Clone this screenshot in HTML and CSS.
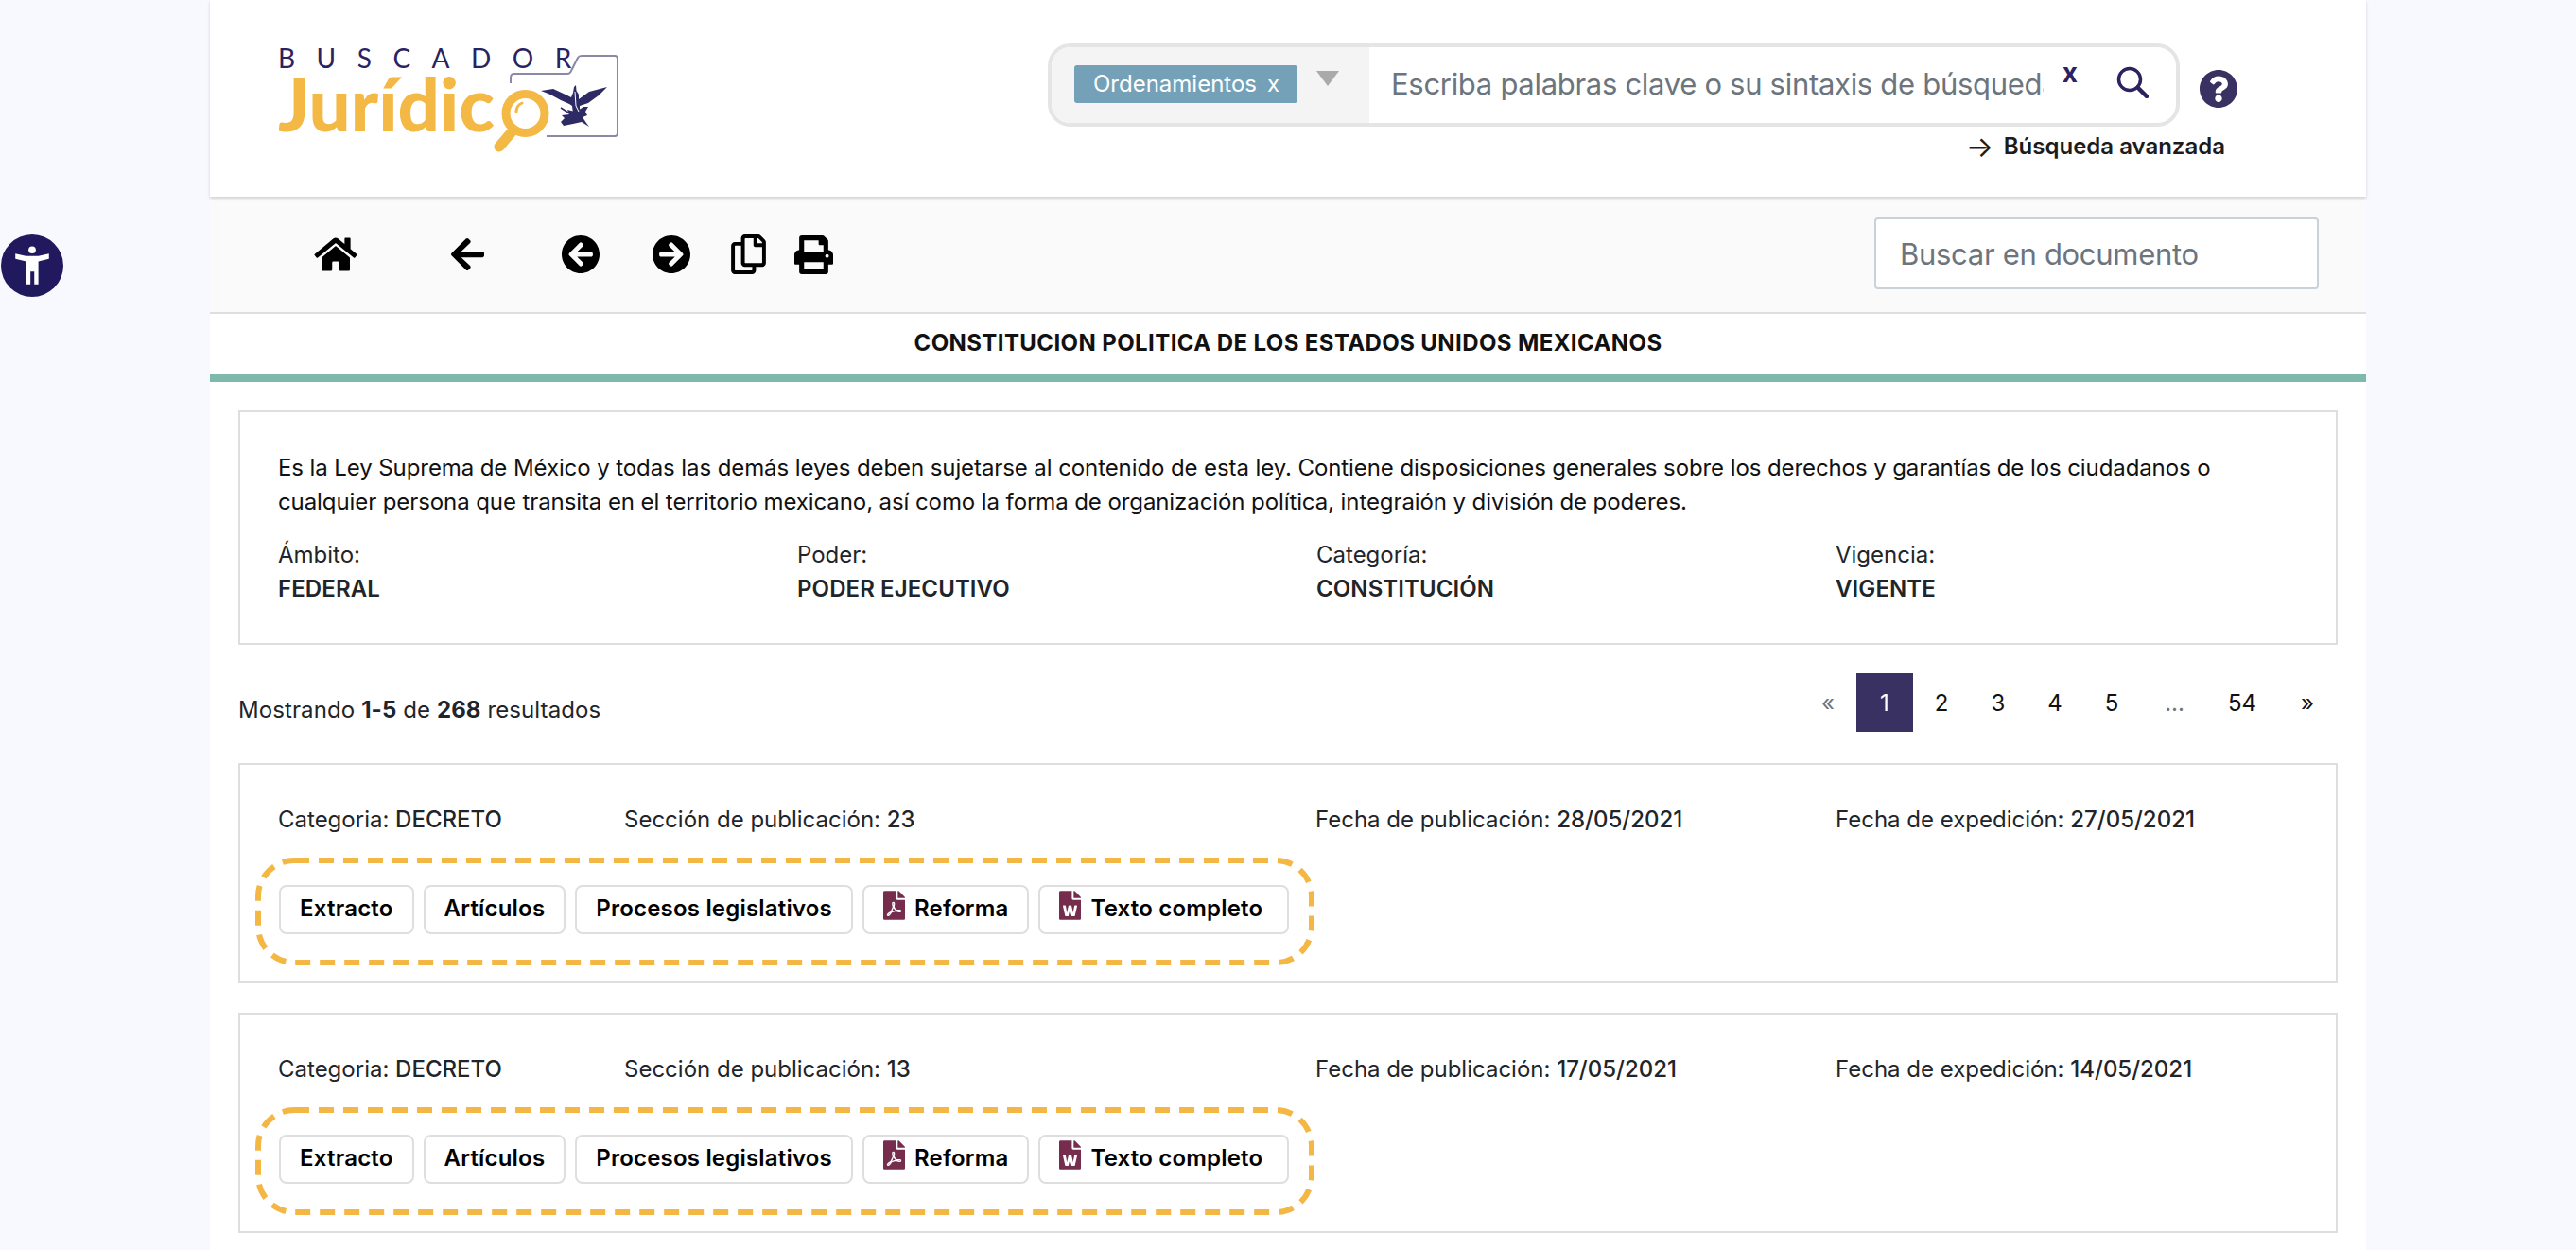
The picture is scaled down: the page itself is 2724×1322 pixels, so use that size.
FILE: index.html
```html
<!DOCTYPE html>
<html lang="es">
<head>
<meta charset="utf-8">
<title>Buscador Jurídico</title>
<link rel="stylesheet" href="styles.css">
</head>
<body>
<button class="a11y" aria-label="Accesibilidad">
  <svg viewBox="0 0 65 65" width="66" height="66"><circle cx="32.5" cy="32.5" r="32.5" fill="#21195e"/><circle cx="32.5" cy="16" r="3.800" fill="#fff"/><path d="M15 20L26 22.500H39L50 20V25.300L39 28V52H34.700V38.700H30.700V52H26.300V28L15 25.300Z" fill="#fff"/></svg>
</button>
<div class="page">
  <header class="header">
    <a class="logo" href="#">
      <span class="logo-top">BUSCADOR</span>
      <span class="logo-main">Jurídic</span>
      <svg class="logo-art" viewBox="294 0 400 208" width="400" height="208" aria-hidden="true">
        <path d="M540 88v-6q0-4 4-4h56q3 0 4-3l7-14q1-2 4-2h35q3 0 3 3v79q0 3-3 3h-72" fill="none" stroke="#8b8aa6" stroke-width="2"/>
        <circle cx="555.500" cy="120" r="20.500" fill="#fff" stroke="#f4b844" stroke-width="9"/>
        <path d="M540 141l-12 14" stroke="#f4b844" stroke-width="11" stroke-linecap="round"/>
        <path d="M546 118a10 10 0 0 1 6-9" fill="none" stroke="#f4b844" stroke-width="3" stroke-linecap="round"/>
        <path d="M572 96L585 94L598 100L604 103L606 98L607 92L609 90L609.500 96L612 100L612 105L623 97L642 92L633 101L622 109L613 112L613 120L606 120L605 112L602 110L593 106L582 100Z" fill="#2d2a66"/>
        <path d="M600 116L608 118L614 115L617 113L622 113L619 118L621 122L616 124L620 130L623 134L615 129L606 131L596 133L593 129L597 125L594 122L602 121Z" fill="#2d2a66"/>
        <path d="M593 114L604 121" stroke="#2d2a66" stroke-width="1.500"/>
        <path d="M608 97L609 112L612 118" fill="none" stroke="#fff" stroke-width="1"/>
      </svg>
    </a>
    <div class="header-right">
      <div class="search-row">
        <div class="search-box">
          <div class="search-filter">
            <span class="tag">Ordenamientos<span class="tag-x">x</span></span>
            <span class="caret"></span>
          </div>
          <input class="search-input" type="text" placeholder="Escriba palabras clave o su sintaxis de búsqueda">
          <span class="search-clear">x</span>
          <svg class="search-icon" viewBox="0 0 34 34" width="34" height="34" aria-hidden="true"><circle cx="14" cy="14" r="11.500" fill="none" stroke="#2b2262" stroke-width="3.500"/><path d="M22.500 22.500L32 32" stroke="#2b2262" stroke-width="4.500" stroke-linecap="round"/></svg>
        </div>
        <svg class="help" viewBox="8 8 496 496" width="40" height="40" aria-hidden="true"><path fill="#3a3163" d="M504 256c0 136.997-111.043 248-248 248S8 392.997 8 256C8 119.083 119.043 8 256 8s248 111.083 248 248zM262.655 90c-54.497 0-89.255 22.957-116.549 63.758-3.536 5.286-2.353 12.415 2.715 16.258l34.699 26.31c5.205 3.947 12.621 3.008 16.665-2.122 17.864-22.658 30.113-35.797 57.303-35.797 20.429 0 45.698 13.148 45.698 32.958 0 14.976-12.363 22.667-32.534 33.976C247.128 238.528 216 254.941 216 296v4c0 6.627 5.373 12 12 12h56c6.627 0 12-5.373 12-12v-1.333c0-28.462 83.186-29.647 83.186-106.667 0-58.002-60.165-102-116.531-102zM256 338c-25.365 0-46 20.635-46 46 0 25.364 20.635 46 46 46s46-20.636 46-46c0-25.365-20.635-46-46-46z"/></svg>
      </div>
      <a class="advanced" href="#"><span class="advanced-arrow">→</span>Búsqueda avanzada</a>
    </div>
  </header>

  <nav class="toolbar">
    <svg class="tool tool-home" viewBox="0 0 576 512" width="46" height="40"><path d="M280.37 148.26L96 300.11V464a16 16 0 0 0 16 16l112.06-.29a16 16 0 0 0 15.92-16V368a16 16 0 0 1 16-16h64a16 16 0 0 1 16 16v95.64a16 16 0 0 0 16 16.05L464 480a16 16 0 0 0 16-16V300L295.67 148.26a12.19 12.19 0 0 0-15.3 0zM571.6 251.47L488 182.56V44.05a12 12 0 0 0-12-12h-56a12 12 0 0 0-12 12v72.61L318.47 43a48 48 0 0 0-61 0L4.34 251.47a12 12 0 0 0-1.6 16.9l25.5 31A12 12 0 0 0 45.15 301l235.22-193.74a12.19 12.19 0 0 1 15.3 0L530.9 301a12 12 0 0 0 16.9-1.6l25.5-31a12 12 0 0 0-1.7-16.93z"/></svg>
    <svg class="tool tool-back" viewBox="0 0 448 512" width="35" height="40"><path d="M257.5 445.1l-22.2 22.2c-9.4 9.4-24.6 9.4-33.9 0L7 273c-9.4-9.4-9.4-24.6 0-33.9L201.4 44.7c9.4-9.4 24.6-9.4 33.9 0l22.2 22.2c9.500 9.500 9.300 25-.4 34.300L136.6 216H424c13.300 0 24 10.700 24 24v32c0 13.300-10.700 24-24 24H136.6l120.500 114.800c9.800 9.300 10 24.800.4 34.300z"/></svg>
    <svg class="tool tool-prev" viewBox="8 8 496 496" width="40" height="40"><path d="M256 504C119 504 8 393 8 256S119 8 256 8s248 111 248 248-111 248-248 248zm28.9-143.6L209.4 288H392c13.300 0 24-10.700 24-24v-16c0-13.300-10.700-24-24-24H209.4l75.500-72.400c9.700-9.300 9.900-24.800.4-34.300l-11-10.900c-9.400-9.400-24.600-9.400-33.900 0L107.700 239c-9.400 9.400-9.400 24.600 0 33.900l132.700 132.700c9.400 9.400 24.600 9.400 33.900 0l11-10.900c9.500-9.500 9.300-25-.4-34.300z"/></svg>
    <svg class="tool tool-next" viewBox="8 8 496 496" width="40" height="40"><path d="M256 8c137 0 248 111 248 248S393 504 256 504 8 393 8 256 119 8 256 8zm-28.9 143.600l75.500 72.400H120c-13.300 0-24 10.700-24 24v16c0 13.300 10.700 24 24 24h182.600l-75.500 72.400c-9.700 9.300-9.900 24.800-.4 34.300l11 10.900c9.400 9.400 24.600 9.400 33.900 0L404.300 273c9.400-9.400 9.400-24.600 0-33.900L271.600 106.300c-9.400-9.400-24.600-9.400-33.900 0l-11 10.900c-9.500 9.600-9.300 25.100.4 34.400z"/></svg>
    <svg class="tool tool-copy" viewBox="0 0 448 512" width="37" height="42"><path d="M433.941 65.941l-51.882-51.882A48 48 0 0 0 348.118 0H176c-26.51 0-48 21.49-48 48v48H48c-26.51 0-48 21.49-48 48v320c0 26.51 21.49 48 48 48h224c26.51 0 48-21.49 48-48v-48h80c26.51 0 48-21.49 48-48V99.882a48 48 0 0 0-14.059-33.941zM266 464H54a6 6 0 0 1-6-6V150a6 6 0 0 1 6-6h74v224c0 26.51 21.49 48 48 48h96v42a6 6 0 0 1-6 6zm128-96H182a6 6 0 0 1-6-6V54a6 6 0 0 1 6-6h106v88c0 13.255 10.745 24 24 24h88v202a6 6 0 0 1-6 6zm6-256h-64V48h9.632c1.591 0 3.117.632 4.243 1.757l48.368 48.368a6 6 0 0 1 1.757 4.243V112z"/></svg>
    <svg class="tool tool-print" viewBox="0 0 512 512" width="41" height="41"><path d="M448 192V77.25c0-8.49-3.37-16.62-9.37-22.63L393.37 9.37c-6-6-14.14-9.37-22.63-9.37H96C78.33 0 64 14.33 64 32v160c-35.35 0-64 28.65-64 64v112c0 8.84 7.16 16 16 16h48v96c0 17.67 14.33 32 32 32h320c17.67 0 32-14.33 32-32v-96h48c8.84 0 16-7.16 16-16V256c0-35.35-28.65-64-64-64zm-64 256H128v-96h256v96zm0-224H128V64h192v48c0 8.84 7.16 16 16 16h48v96zm48 72c-13.25 0-24-10.75-24-24 0-13.26 10.75-24 24-24s24 10.74 24 24c0 13.25-10.75 24-24 24z"/></svg>
    <input class="doc-search" type="text" placeholder="Buscar en documento">
  </nav>

  <h1 class="doc-title">CONSTITUCION POLITICA DE LOS ESTADOS UNIDOS MEXICANOS</h1>

  <main class="content">
    <section class="panel">
      <p class="panel-text">Es la Ley Suprema de México y todas las demás leyes deben sujetarse al contenido de esta ley. Contiene disposiciones generales sobre los derechos y garantías de los ciudadanos o cualquier persona que transita en el territorio mexicano, así como la forma de organización política, integraión y división de poderes.</p>
      <div class="meta-grid">
        <div>Ámbito:<strong class="meta-value">FEDERAL</strong></div>
        <div>Poder:<strong class="meta-value">PODER EJECUTIVO</strong></div>
        <div>Categoría:<strong class="meta-value">CONSTITUCIÓN</strong></div>
        <div>Vigencia:<strong class="meta-value">VIGENTE</strong></div>
      </div>
    </section>

    <div class="results-bar">
      <p class="results-count">Mostrando <b>1-5</b> de <b>268</b> resultados</p>
      <ul class="pagination">
        <li class="muted">«</li><li class="active">1</li><li>2</li><li>3</li><li>4</li><li>5</li><li class="muted dots">...</li><li class="wide">54</li><li>»</li>
      </ul>
    </div>

    <article class="card">
      <div class="card-row">
        <div class="card-split"><span>Categoria: <span class="val">DECRETO</span></span><span>Sección de publicación: <span class="val">23</span></span></div>
        <div>Fecha de publicación: <span class="val">28/05/2021</span></div>
        <div>Fecha de expedición: <span class="val">27/05/2021</span></div>
      </div>
      <div class="actions">
        <svg class="dash" width="1120" height="114" aria-hidden="true"><rect x="3" y="3" width="1114" height="108" rx="38" fill="none" stroke="#f4b744" stroke-width="6" stroke-dasharray="16 10"/></svg>
        <a class="btn">Extracto</a>
        <a class="btn">Artículos</a>
        <a class="btn">Procesos legislativos</a>
        <a class="btn btn-reforma"><svg class="file-icon" viewBox="0 0 384 512" width="23" height="31"><path d="M181.9 256.100c-5-16-4.900-46.900-2-46.900 8.400 0 7.600 36.900 2 46.900zm-1.700 47.200c-7.700 20.200-17.300 43.300-28.400 62.700 18.300-7 39-17.200 62.900-21.900-12.700-9.600-24.900-23.400-34.500-40.800zM86.100 428.100c0 .8 13.200-5.400 34.900-40.200-6.700 6.300-29.100 24.500-34.900 40.200zM248 160h136v328c0 13.300-10.700 24-24 24H24c-13.300 0-24-10.700-24-24V24C0 10.700 10.700 0 24 0h200v136c0 13.200 10.800 24 24 24zm-8 171.800c-20-12.200-33.300-29-42.700-53.800 4.500-18.500 11.600-46.600 6.200-64.200-4.700-29.400-42.400-26.500-47.800-6.800-5 18.300-.4 44.100 8.100 77-11.600 27.600-28.700 64.600-40.800 85.800-.1 0-.1.1-.2.1-27.100 13.900-73.600 44.500-54.500 68 5.600 6.900 16 10 21.500 10 17.900 0 35.700-18 61.100-61.800 25.800-8.500 54.100-19.100 79-23.200 21.700 11.800 47.100 19.500 64 19.500 29.200 0 31.200-32 19.700-43.400-13.900-13.600-54.300-9.700-73.600-7.200zM377 105L279 7c-4.500-4.500-10.600-7-17-7h-6v128h128v-6.100c0-6.300-2.500-12.400-7-16.900zm-74.100 255.300c4.100-2.700-2.500-11.900-42.800-9 37.100 15.800 42.800 9 42.800 9z"/></svg>Reforma</a>
        <a class="btn btn-texto"><svg class="file-icon" viewBox="0 0 384 512" width="23" height="31"><path d="M224 136V0H24C10.700 0 0 10.700 0 24v464c0 13.300 10.700 24 24 24h336c13.300 0 24-10.700 24-24V160H248c-13.200 0-24-10.800-24-24zm57.100 120H305c7.700 0 13.400 7.100 11.700 14.700l-38 168c-1.200 5.500-6.100 9.300-11.700 9.300h-38c-5.500 0-10.300-3.800-11.600-9.100-25.800-103.500-20.800-81.200-25.600-110.500h-.5c-1.100 14.300-2.400 17.400-25.600 110.500-1.300 5.300-6.100 9.100-11.600 9.100H117c-5.600 0-10.500-3.900-11.700-9.400l-37.800-168c-1.700-7.500 4-14.600 11.700-14.600h24.500c5.700 0 10.700 4 11.800 9.700 15.600 78 20.100 109.500 21 122.200 1.600-10.200 7.300-32.700 29.400-122.700 1.300-5.400 6.100-9.100 11.700-9.100h29.100c5.600 0 10.400 3.800 11.700 9.200 24 100.400 28.800 124 29.600 129.400-.2-11.200-2.600-17.800 21.600-129.200 1-5.600 5.900-9.500 11.500-9.500zM384 121.900v6.100H256V0h6.100c6.400 0 12.500 2.500 17 7l97.900 98c4.500 4.500 7 10.600 7 16.900z"/></svg>Texto completo</a>
      </div>
    </article>

    <article class="card">
      <div class="card-row">
        <div class="card-split"><span>Categoria: <span class="val">DECRETO</span></span><span>Sección de publicación: <span class="val">13</span></span></div>
        <div>Fecha de publicación: <span class="val">17/05/2021</span></div>
        <div>Fecha de expedición: <span class="val">14/05/2021</span></div>
      </div>
      <div class="actions">
        <svg class="dash" width="1120" height="114" aria-hidden="true"><rect x="3" y="3" width="1114" height="108" rx="38" fill="none" stroke="#f4b744" stroke-width="6" stroke-dasharray="16 10"/></svg>
        <a class="btn">Extracto</a>
        <a class="btn">Artículos</a>
        <a class="btn">Procesos legislativos</a>
        <a class="btn btn-reforma"><svg class="file-icon" viewBox="0 0 384 512" width="23" height="31"><path d="M181.9 256.100c-5-16-4.900-46.900-2-46.900 8.400 0 7.600 36.900 2 46.900zm-1.700 47.200c-7.700 20.200-17.300 43.300-28.400 62.700 18.300-7 39-17.200 62.900-21.900-12.700-9.600-24.900-23.400-34.500-40.800zM86.100 428.100c0 .8 13.200-5.400 34.900-40.200-6.700 6.300-29.100 24.500-34.900 40.200zM248 160h136v328c0 13.300-10.700 24-24 24H24c-13.300 0-24-10.700-24-24V24C0 10.700 10.700 0 24 0h200v136c0 13.200 10.800 24 24 24zm-8 171.800c-20-12.200-33.300-29-42.700-53.800 4.500-18.500 11.600-46.600 6.200-64.200-4.700-29.400-42.400-26.500-47.800-6.800-5 18.300-.4 44.100 8.100 77-11.600 27.600-28.700 64.600-40.800 85.800-.1 0-.1.1-.2.1-27.100 13.900-73.600 44.500-54.500 68 5.600 6.900 16 10 21.500 10 17.900 0 35.700-18 61.100-61.800 25.800-8.500 54.100-19.100 79-23.200 21.700 11.800 47.100 19.500 64 19.500 29.200 0 31.200-32 19.700-43.400-13.900-13.600-54.300-9.700-73.600-7.200zM377 105L279 7c-4.500-4.500-10.600-7-17-7h-6v128h128v-6.100c0-6.300-2.500-12.400-7-16.900zm-74.100 255.300c4.100-2.700-2.500-11.900-42.800-9 37.100 15.800 42.800 9 42.800 9z"/></svg>Reforma</a>
        <a class="btn btn-texto"><svg class="file-icon" viewBox="0 0 384 512" width="23" height="31"><path d="M224 136V0H24C10.700 0 0 10.700 0 24v464c0 13.300 10.700 24 24 24h336c13.300 0 24-10.700 24-24V160H248c-13.200 0-24-10.800-24-24zm57.100 120H305c7.700 0 13.400 7.100 11.700 14.700l-38 168c-1.200 5.500-6.100 9.300-11.700 9.300h-38c-5.500 0-10.300-3.800-11.600-9.100-25.800-103.500-20.800-81.200-25.600-110.500h-.5c-1.100 14.300-2.400 17.400-25.600 110.500-1.300 5.300-6.100 9.100-11.600 9.100H117c-5.600 0-10.500-3.900-11.700-9.400l-37.800-168c-1.700-7.500 4-14.600 11.700-14.600h24.500c5.700 0 10.700 4 11.800 9.700 15.600 78 20.100 109.500 21 122.200 1.600-10.200 7.300-32.700 29.400-122.700 1.300-5.400 6.100-9.100 11.700-9.100h29.100c5.600 0 10.400 3.800 11.700 9.200 24 100.400 28.800 124 29.600 129.400-.2-11.200-2.600-17.800 21.600-129.200 1-5.600 5.900-9.500 11.500-9.500zM384 121.900v6.100H256V0h6.100c6.400 0 12.500 2.500 17 7l97.900 98c4.500 4.500 7 10.600 7 16.900z"/></svg>Texto completo</a>
      </div>
    </article>
  </main>
</div>
</body>
</html>
```
FILE: styles.css
```css
* { box-sizing: border-box; }
html, body { height: 100%; }
body {
  margin: 0;
  background: #f8f9fe;
  color: #212529;
  font-family: Inter, "Liberation Sans", sans-serif;
  font-size: 24px;
  line-height: 36px;
  overflow: hidden;
}
.a11y {
  position: fixed;
  left: 1px;
  top: 248px;
  width: 66px;
  height: 66px;
  padding: 0;
  border: 0;
  background: none;
}
.a11y svg { display: block; }
.page {
  width: 2280px;
  min-height: 100%;
  margin: 0 auto;
  background: #fff;
}

/* header */
.header {
  position: relative;
  display: flex;
  height: 208px;
  background: #fff;
  box-shadow: 0 2px 3px rgba(0,0,0,.16);
}
.logo {
  position: relative;
  display: block;
  width: 400px;
  margin-left: 72px;
  text-decoration: none;
}
.logo-top {
  display: block;
  margin-top: 47px;
  color: #2b2262;
  font-family: Lato, sans-serif;
  font-size: 28px;
  line-height: 28px;
  letter-spacing: 22.500px;
}
.logo-main {
  display: block;
  color: #f4b844;
  font-family: Lato, sans-serif;
  font-weight: 900;
  font-size: 78px;
  line-height: 68px;
}
.logo-art { position: absolute; left: 0; top: 0; }
.header-right {
  display: flex;
  flex-direction: column;
  align-items: flex-end;
  margin-left: auto;
  margin-right: 136px;
  padding-top: 46px;
}
.search-row { display: flex; align-items: flex-start; }
.search-box {
  display: flex;
  width: 1197px;
  height: 88px;
  border: 4px solid #e5e5e5;
  border-radius: 24px;
  overflow: hidden;
  background: #fff;
}
.search-filter {
  position: relative;
  display: flex;
  flex: none;
  width: 336px;
  padding: 19px 0 0 24px;
  background: #f4f4f4;
}
.tag {
  display: flex;
  height: 40px;
  align-items: center;
  padding: 0 19px 0 20px;
  border-radius: 3px;
  background: #74a1b8;
  color: #fff;
  font-size: 24px;
}
.tag-x { margin-left: 11px; }
.caret {
  margin: 6px 0 0 20px;
  border-style: solid;
  border-width: 16px 12px 0;
  border-color: #aaa transparent transparent;
  height: 0;
}
.search-input {
  flex: 1;
  min-width: 0;
  padding: 0 4px 4px 23px;
  border: 0;
  outline: 0;
  background: transparent;
  font: 31px Inter, sans-serif;
  letter-spacing: -.3px;
}
.search-input::placeholder, .doc-search::placeholder { color: #6c757d; opacity: 1; }
.search-clear {
  margin: 9px 41px 0 16px;
  color: #2b2262;
  font-weight: 700;
  font-size: 28px;
  line-height: 36px;
}
.search-icon { flex: none; margin: 20px 29px 0 0; }
.help { flex: none; margin: 28px 0 0 21px; }
.advanced {
  display: flex;
  margin: 3px 13px 0 0;
  color: #1c1c1c;
  font-weight: 600;
  text-decoration: none;
}
.advanced-arrow { width: 40px; font-size: 31px; font-weight: 400; }

/* toolbar */
.toolbar {
  display: flex;
  align-items: center;
  height: 124px;
  padding: 0 50px 0 110px;
  border-bottom: 2px solid #dedede;
  background: #fafafa;
}
.tool { flex: none; }
.tool-back { margin-left: 99px; }
.tool-prev { margin-left: 82px; }
.tool-next { margin-left: 56px; }
.tool-copy { margin-left: 43px; }
.tool-print { margin-left: 30px; }
.doc-search {
  width: 470px;
  height: 76px;
  margin: 0 0 2px auto;
  padding: 0 25px;
  border: 2px solid #cad1d7;
  border-radius: 4px;
  background: #fff;
  font: 31px Inter, sans-serif;
  letter-spacing: -.3px;
}

.doc-title {
  height: 64px;
  margin: 0;
  color: #111;
  font-size: 24px;
  font-weight: 700;
  line-height: 62px;
  letter-spacing: .4px;
  text-align: center;
}

/* content */
.content {
  padding: 30px 30px 0;
  border-top: 8px solid #7fb9ad;
}
.panel {
  height: 248px;
  padding: 41px 40px 0;
  border: 2px solid #dedede;
}
.panel-text { margin: 0 0 20px; color: #111; letter-spacing: -.09px; }
.meta-grid {
  display: grid;
  grid-template-columns: repeat(4, 549px);
  width: 2196px;
}
.meta-value { display: block; font-weight: 600; letter-spacing: .1px; }
.results-bar {
  display: flex;
  justify-content: space-between;
  height: 125px;
  padding-top: 30px;
}
.results-count { margin: 21px 0 0; letter-spacing: .1px; }
.results-count b { font-weight: 700; }
.pagination {
  display: flex;
  height: 62px;
  margin: 0 2px 0 0;
  padding: 0;
  list-style: none;
  color: #111;
  line-height: 64px;
}
.pagination li { width: 60px; text-align: center; }
.pagination .active { background: #3a3163; color: #fff; }
.pagination .muted { color: #6c757d; }
.pagination .dots { width: 73px; }
.pagination .wide { width: 74px; padding-right: 4px; }

.card {
  height: 233px;
  margin-bottom: 31px;
  padding: 40px 40px 0;
  border: 2px solid #dedede;
}
.card-row {
  display: grid;
  grid-template-columns: 1097px 550px 549px;
}
.card-split { display: flex; }
.card-split > :first-child { width: 366px; }
.val { font-weight: 500; }
.actions {
  position: relative;
  display: flex;
  align-items: flex-start;
  gap: 10px;
  width: 1120px;
  height: 114px;
  margin: 22px 0 0 -24px;
  padding: 29px 0 0 25px;
}
.dash { position: absolute; left: 0; top: 0; }
.btn {
  display: flex;
  height: 52px;
  padding: 0 20px;
  border: 2px solid #dedede;
  border-radius: 8px;
  background: #fff;
  color: #000;
  font-weight: 600;
  line-height: 46px;
  letter-spacing: .2px;
  white-space: nowrap;
}
.btn-texto { padding-right: 26px; }
.file-icon { flex: none; margin: 4px 10px 0 0; fill: #762c4c; }
```
